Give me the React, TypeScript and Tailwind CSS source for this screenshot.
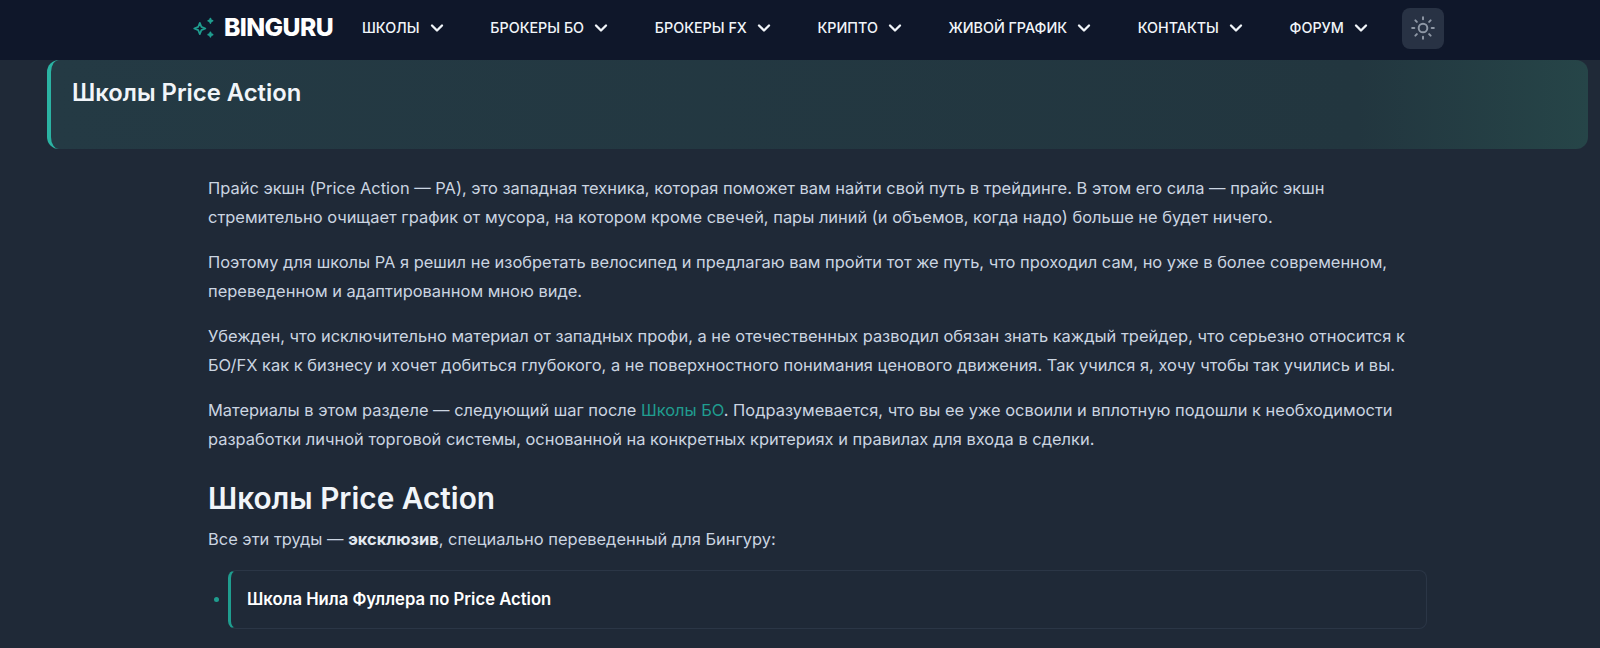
import React from 'react';
import { ChevronDown, Sun } from 'lucide-react';

const navItems = ['ШКОЛЫ', 'БРОКЕРЫ БО', 'БРОКЕРЫ FX', 'КРИПТО', 'ЖИВОЙ ГРАФИК', 'КОНТАКТЫ', 'ФОРУМ'];

const Sparkles: React.FC = () => (
  <svg width="21" height="21" viewBox="0 0 21 21" fill="none" stroke="#1f9d8f" strokeWidth="1.7" strokeLinejoin="round">
    <path d="M6.8 5.8 L8.4 9.9 L12.4 11.5 L8.4 13.1 L6.8 17.2 L5.2 13.1 L1.2 11.5 L5.2 9.9 Z" />
    <path d="M17.4 1.6 L18 3.2 L19.6 3.8 L18 4.4 L17.4 6 L16.8 4.4 L15.2 3.8 L16.8 3.2 Z" fill="#1f9d8f" />
    <path d="M17.4 15.4 L18 17 L19.6 17.6 L18 18.2 L17.4 19.8 L16.8 18.2 L15.2 17.6 L16.8 17 Z" fill="#1f9d8f" />
  </svg>
);

const App: React.FC = () => {
  return (
    <div className="h-[648px] overflow-hidden bg-[#1f2937] text-[#cbd5e1] font-['Inter',sans-serif]">
      <header className="h-[60px] bg-[#0f172a] flex items-center pl-[193px] pb-[4px]">
        <div className="flex items-center gap-[10px] mr-[29px]">
          <Sparkles />
          <span className="text-[24.7px] font-extrabold tracking-[-0.6px] text-white">BINGURU</span>
        </div>
        <nav className="flex items-center gap-[43.7px]">
          {navItems.map(item => (
            <a key={item} className="flex items-center gap-[7px] text-[14.3px] font-medium text-[#f1f5f9]">
              {item}
              <ChevronDown size={20} strokeWidth={2.8} className="text-[#f1f5f9]" />
            </a>
          ))}
        </nav>
        <button className="ml-[31px] w-[42px] h-[41px] rounded-lg bg-[#283244] flex items-center justify-center">
          <Sun size={26} strokeWidth={1.8} className="text-[#8f98a6]" />
        </button>
      </header>

      <div className="ml-[47px] w-[1541px] h-[88.7px] rounded-xl border-l-4 border-[#2bb3a3] bg-[linear-gradient(90deg,#243a44,#22363f_85%,#264548)] pl-[21px] pt-[17px]">
        <h1 className="text-[23.8px] leading-[32px] font-semibold text-[#f1f5f9]">Школы Price Action</h1>
      </div>

      <main className="ml-[208px] w-[1219px] pt-[25px] text-[16.45px] leading-[29.6px]">
        <p className="mb-[14.8px]">
          Прайс экшн (Price Action — PA), это западная техника, которая поможет вам найти свой путь в трейдинге. В этом его сила — прайс экшн стремительно очищает график от мусора, на котором кроме свечей, пары линий (и объемов, когда надо) больше не будет ничего.
        </p>
        <p className="mb-[14.8px]">
          Поэтому для школы PA я решил не изобретать велосипед и предлагаю вам пройти тот же путь, что проходил сам, но уже в более современном, переведенном и адаптированном мною виде.
        </p>
        <p className="mb-[14.8px]">
          Убежден, что исключительно материал от западных профи, а не отечественных разводил обязан знать каждый трейдер, что серьезно относится к БО/FX как к бизнесу и хочет добиться глубокого, а не поверхностного понимания ценового движения. Так учился я, хочу чтобы так учились и вы.
        </p>
        <p className="mb-[14.8px]">
          Материалы в этом разделе — следующий шаг после <a className="text-[#1f9d8f]">Школы БО</a>. Подразумевается, что вы ее уже освоили и вплотную подошли к необходимости разработки личной торговой системы, основанной на конкретных критериях и правилах для входа в сделки.
        </p>
        <h2 className="mt-[23px] mb-[7px] text-[29.8px] leading-[40px] font-semibold text-[#f1f5f9]">Школы Price Action</h2>
        <p>
          Все эти труды — <strong className="font-bold text-[#e2e8f0]">эксклюзив</strong>, специально переведенный для Бингуру:
        </p>
        <ul className="mt-[16px] ml-[20px]">
          <li className="flex items-center">
            <span className="-ml-[14px] mr-[9px] w-[5px] h-[5px] rounded-full bg-[#1f9d8f]" />
            <div className="flex-1 h-[59px] flex items-center rounded-lg border border-[#2b3646] border-l-[3px] border-l-[#1f9d8f] pl-[16px]">
              <span className="text-[16.65px] font-semibold text-white">Школа Нила Фуллера по Price Action</span>
            </div>
          </li>
        </ul>
      </main>
    </div>
  );
};

export default App;
